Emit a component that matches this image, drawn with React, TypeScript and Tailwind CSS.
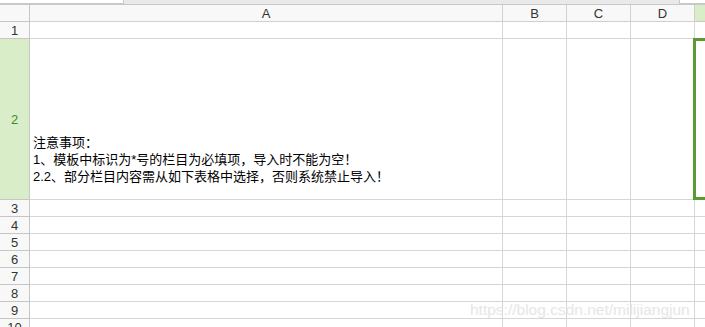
import React from 'react';

const COLS = [
  { id: 'A', w: 'w-[473px]' },
  { id: 'B', w: 'w-[64px]' },
  { id: 'C', w: 'w-[64px]' },
  { id: 'D', w: 'w-[64px]' },
];

const ROWS = [
  { n: 1, h: 'h-[17px]' },
  { n: 2, h: 'h-[161px]' },
  { n: 3, h: 'h-[17px]' },
  { n: 4, h: 'h-[17px]' },
  { n: 5, h: 'h-[17px]' },
  { n: 6, h: 'h-[17px]' },
  { n: 7, h: 'h-[17px]' },
  { n: 8, h: 'h-[17px]' },
  { n: 9, h: 'h-[17px]' },
  { n: 10, h: 'h-[17px]' },
];

const NOTE = [
  '注意事项：',
  '1、模板中标识为*号的栏目为必填项，导入时不能为空！',
  '2.2、部分栏目内容需从如下表格中选择，否则系统禁止导入！',
];

export default function App() {
  return (
    <div className="relative w-[705px] h-[327px] overflow-hidden bg-white font-['Liberation_Sans','Noto_Sans_CJK_SC',sans-serif] text-[12px] text-[#222]">
      {/* sheet tab strip */}
      <div className="flex h-[5px] border-b border-[#c8c8c8] bg-[#e9e9e9]">
        <div className="w-[124px] h-[4px] bg-white border-r border-b border-[#c8c8c8]" />
        <div className="w-[555px]" />
        <div className="flex-1 h-[4px] bg-white border-l border-b border-[#c8c8c8]" />
      </div>

      {/* column headers */}
      <div className="flex h-[17px]">
        <div className="w-[30px] shrink-0 bg-[#f8f8f8] border-r border-b border-[#c6c6c6]" />
        {COLS.map((c) => (
          <div
            key={c.id}
            className={`${c.w} shrink-0 flex items-center justify-center bg-[#f8f8f8] border-r border-b border-[#d0d0d0] text-[13px] text-[#333] leading-none`}
          >
            {c.id}
          </div>
        ))}
        <div className="flex-1 bg-[#d9edc9] border-b border-[#c6c6c6]" />
      </div>

      {ROWS.map((r) => {
        const sel = r.n === 2;
        return (
          <div key={r.n} className={`flex ${r.h}`}>
            <div
              className={`w-[30px] shrink-0 flex items-center justify-center border-r border-b border-[#c6c6c6] text-[13px] leading-none ${
                sel ? 'bg-[#d9edc9] text-[#3c8c2f]' : 'bg-[#f8f8f8] text-[#333]'
              }`}
            >
              {r.n}
            </div>
            {COLS.map((c) => (
              <div
                key={c.id}
                className={`${c.w} shrink-0 border-r border-b border-[#d6d6d6] ${
                  sel && c.id === 'A' ? 'flex flex-col justify-end pl-[3px] pb-[14px]' : ''
                }`}
              >
                {sel && c.id === 'A' && (
                  <div className="whitespace-nowrap leading-[17px] text-[13px] text-black">
                    {NOTE.map((line) => (
                      <div key={line}>{line}</div>
                    ))}
                  </div>
                )}
              </div>
            ))}
            <div className="flex-1 border-b border-[#d6d6d6]" />
          </div>
        );
      })}

      {/* active cell E2 */}
      <div className="absolute left-[693px] top-[38px] w-[20px] h-[162px] border-[3px] border-[#5a9a32]" />

      {/* watermark */}
      <div className="absolute left-[470px] top-[301px] text-[15.5px] leading-[18px] text-[#e6e6e6] font-['Liberation_Sans',sans-serif]">
        https://blog.csdn.net/milijiangjun
      </div>
    </div>
  );
}
